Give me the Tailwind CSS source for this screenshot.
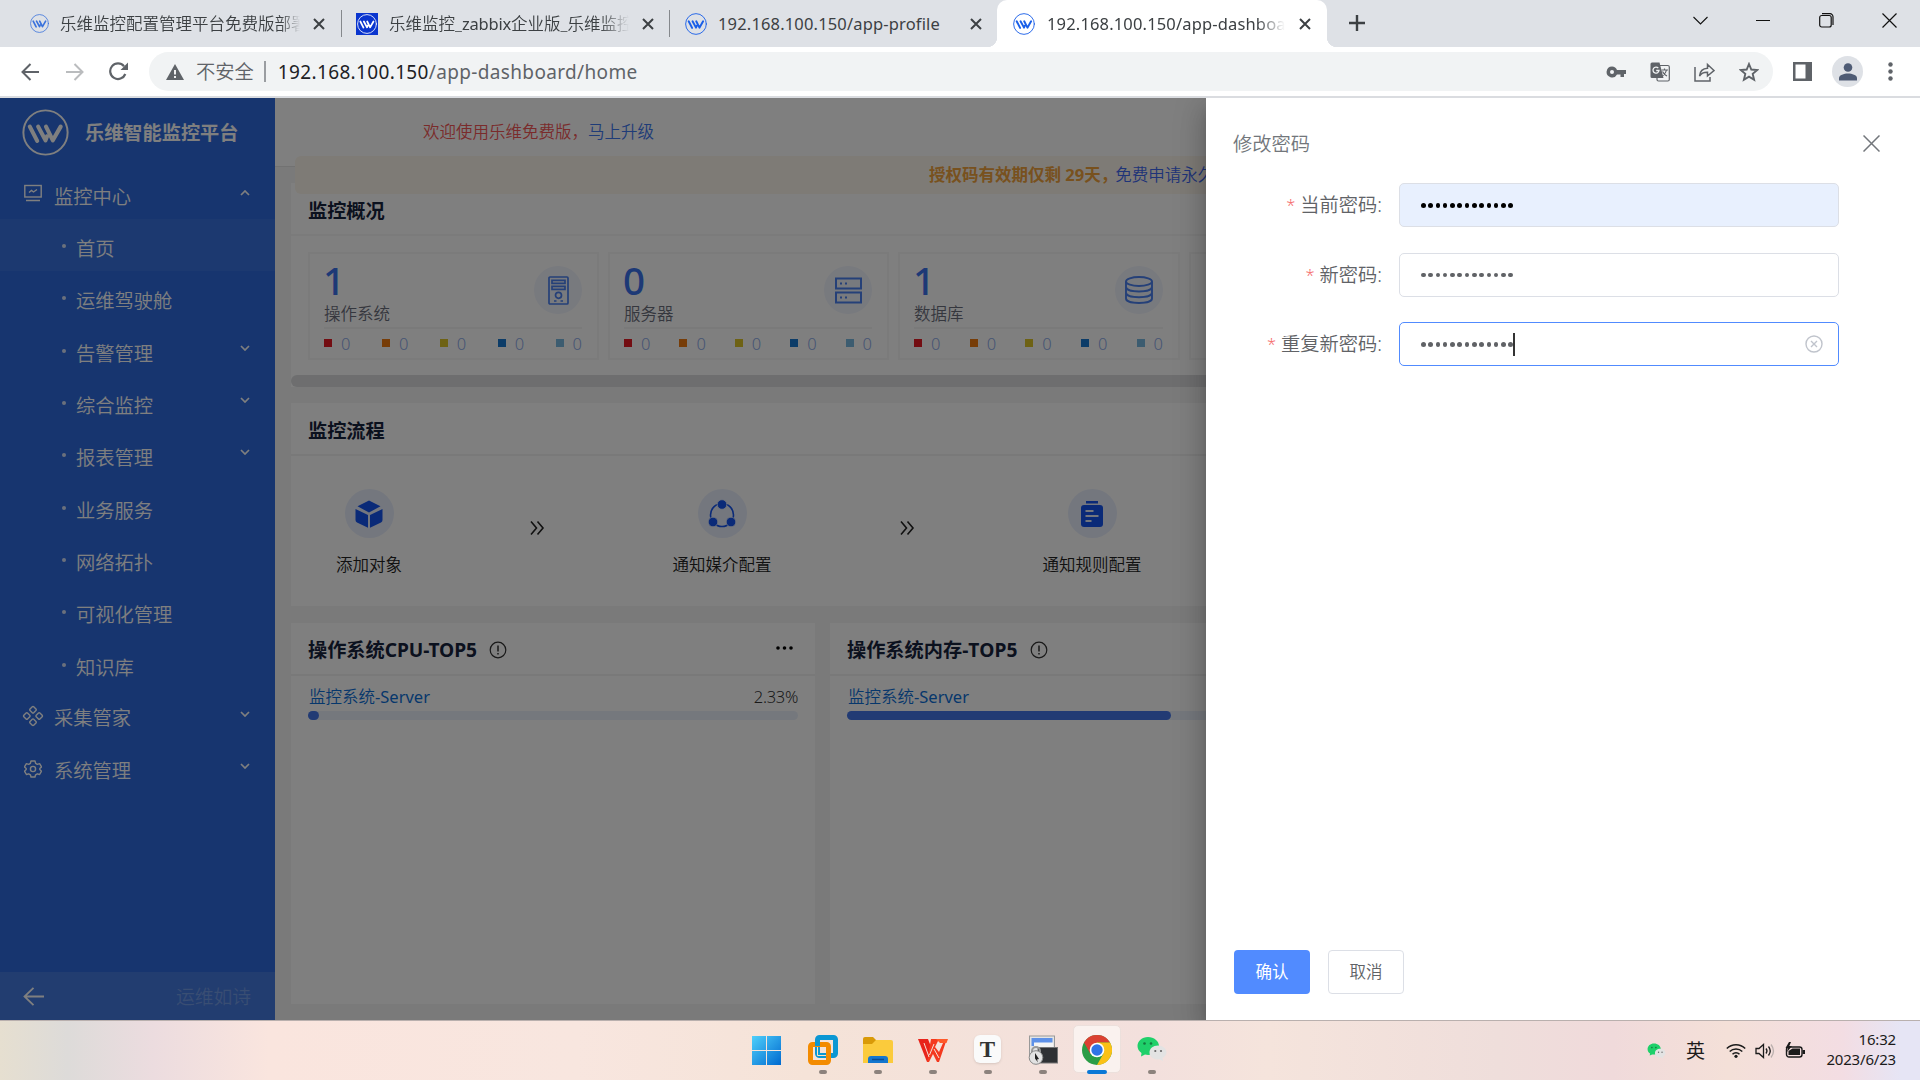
<!DOCTYPE html>
<html lang="zh-CN">
<head>
<meta charset="utf-8">
<title>乐维智能监控平台</title>
<script src="https://cdn.jsdelivr.net/npm/@tailwindcss/browser@4"></script>
</head>
<body class="w-[1920px] h-[1080px] overflow-hidden flex flex-col font-['Noto_Sans','Noto_Sans_CJK_SC',sans-serif] bg-white text-[16.5px] leading-none">
<svg class="hidden">
  <symbol id="logo" viewBox="0 0 48 48"><g fill="none" stroke="currentColor" stroke-linecap="round" stroke-linejoin="round"><circle cx="24" cy="24" r="22.6" stroke-width="2"/><path stroke-width="4.2" d="M8 18l7.5 14.5M16.500 18l7.500 14 1.500-4M24.500 18l7 14L39.500 18"/></g></symbol>
  <symbol id="x" viewBox="0 0 12 12"><path d="M1 1l10 10M11 1L1 11" stroke="currentColor" stroke-width="2" fill="none"/></symbol>
  <symbol id="down" viewBox="0 0 10 6"><path d="M1 1l4 4 4-4" stroke="currentColor" stroke-width="1.700" fill="none"/></symbol>
  <symbol id="info" viewBox="0 0 18 18"><circle cx="9" cy="9" r="7.800" stroke="currentColor" stroke-width="1.200" fill="none"/><path d="M9 4.500v6M9 12v1.500" stroke="currentColor" stroke-width="1.500"/></symbol>
  <symbol id="next" viewBox="0 0 16 16"><path d="M2 1.500l5.500 6.500L2 14.500M8.500 1.500L14 8l-5.500 6.500" stroke="currentColor" stroke-width="1.600" fill="none"/></symbol>
  <symbol id="wechat" viewBox="0 0 30 26"><path d="M11 1C5 1 .5 5 .5 10c0 3 1.500 5.300 4 7L4 20.500l4-2c6 1.500 14-1.500 14-8.500C22 5 17 1 11 1z" fill="#1fd06a"/><circle cx="7.500" cy="7.500" r="1.300" fill="#14773e"/><circle cx="14" cy="7.500" r="1.300" fill="#14773e"/><path d="M21 9.500c-5 0-8.500 3-8.500 7 0 4.500 4.500 7.500 10 6.800l3.500 1.700-.5-3c2.500-1.300 4-3.300 4-5.500 0-4-3.500-7-8.500-7z" fill="#e3e3e3"/><circle cx="18.300" cy="15" r="1.100" fill="#666"/><circle cx="24" cy="15" r="1.100" fill="#666"/></symbol>
</svg>

<!-- tab strip -->
<div class="h-[47px] shrink-0 bg-[#dee1e6] flex text-[#3c4043] font-[350]">
  <div class="w-[341px] h-full pl-[30px] flex items-center">
    <svg class="size-[19px] text-[#3a72dc]"><use href="#logo"/></svg>
    <div class="ml-[11px] w-[240px] overflow-hidden whitespace-nowrap leading-6 [mask-image:linear-gradient(90deg,#000_92%,transparent)]">乐维监控配置管理平台免费版部署</div>
    <svg class="ml-[13px] size-3"><use href="#x"/></svg>
  </div>
  <div class="w-px h-[27px] mt-[10px] bg-[#85888c]"></div>
  <div class="w-[327px] h-full pl-[14px] flex items-center">
    <div class="size-[22px] bg-[#0a35cf] text-white p-px"><svg class="size-5"><use href="#logo"/></svg></div>
    <div class="ml-[11px] w-[240px] overflow-hidden whitespace-nowrap leading-6 [mask-image:linear-gradient(90deg,#000_88%,transparent)]">乐维监控_<span class="font-normal tracking-[-0.2px]">zabbix</span>企业版_乐维监控</div>
    <svg class="ml-[13px] size-3"><use href="#x"/></svg>
  </div>
  <div class="w-px h-[27px] mt-[10px] bg-[#85888c]"></div>
  <div class="w-[327px] h-full pl-[15px] flex items-center">
    <svg class="size-[22px] text-[#1a5fe8]"><use href="#logo"/></svg>
    <div class="ml-[11px] w-[240px] whitespace-nowrap leading-6 font-normal tracking-[0.160px]">192.168.100.150/app-profile</div>
    <svg class="ml-[12px] size-3"><use href="#x"/></svg>
  </div>
  <div class="relative w-[330px] h-full pl-4 flex items-center bg-white rounded-t-[10px]">
    <div class="absolute -left-[10px] bottom-0 size-[10px] bg-[radial-gradient(circle_at_0_0,transparent_10px,#fff_10.5px)]"></div>
    <div class="absolute -right-[10px] bottom-0 size-[10px] bg-[radial-gradient(circle_at_100%_0,transparent_10px,#fff_10.5px)]"></div>
    <svg class="size-[22px] text-[#1a5fe8]"><use href="#logo"/></svg>
    <div class="ml-[12px] w-[238px] overflow-hidden whitespace-nowrap leading-6 font-normal tracking-[0.160px] [mask-image:linear-gradient(90deg,#000_88%,transparent)]">192.168.100.150/app-dashboard</div>
    <svg class="ml-[14px] size-3"><use href="#x"/></svg>
  </div>
  <svg class="ml-[22px] mt-[15px] size-4" viewBox="0 0 16 16"><path d="M8 0v16M0 8h16" stroke="#3c4043" stroke-width="2.400"/></svg>
  <div class="ml-auto mr-[23px] mt-[13px] flex items-start gap-[48px] text-[#111]">
    <svg class="size-[15px]" viewBox="0 0 15 15"><path d="M.5 4l7 7 7-7" stroke="currentColor" stroke-width="1.100" fill="none"/></svg>
    <svg class="size-[15px]" viewBox="0 0 15 15"><path d="M0 7.500h14" stroke="currentColor" stroke-width="1"/></svg>
    <svg class="size-[15px]" viewBox="0 0 15 15"><g stroke="currentColor" stroke-width="1.200" fill="none"><rect x=".7" y="2.500" width="11.500" height="11.500" rx="2"/><path d="M3 .7h8a3 3 0 0 1 3 3V12"/></g></svg>
    <svg class="size-[15px]" viewBox="0 0 15 15"><path d="M.5.5l14 14M14.500.5l-14 14" stroke="currentColor" stroke-width="1.200"/></svg>
  </div>
</div>

<!-- toolbar -->
<div class="h-[51px] shrink-0 bg-white border-b-2 border-[#dadce0] flex items-center text-[#5f6368]">
  <svg class="ml-[21px] size-[18px]" viewBox="0 0 18 18"><path d="M18 9H2M9.500 1L1.500 9l8 8" stroke="currentColor" stroke-width="2" fill="none"/></svg>
  <svg class="ml-[27px] size-[18px] text-[#babcbe]" viewBox="0 0 18 18"><path d="M0 9h16M8.500 1l8 8-8 8" stroke="currentColor" stroke-width="2" fill="none"/></svg>
  <svg class="ml-[25px] size-[19px]" viewBox="0 0 19 19"><path d="M16.300 12A7.800 7.800 0 1 1 15 4.200" stroke="currentColor" stroke-width="2.200" fill="none"/><path d="M19 .5V8h-7.500z" fill="currentColor"/></svg>
  <div class="ml-[21px] w-[1624px] h-[39px] rounded-full bg-[#f1f3f4] flex items-center pl-[17px]">
    <svg class="w-[18px] h-4" viewBox="0 0 18 16"><path d="M9 0l9 16H0z" fill="currentColor"/><path d="M9 6v4.500M9 12v2" stroke="#fff" stroke-width="1.800"/></svg>
    <span class="ml-[12px] text-[19.300px] font-[350] leading-7">不安全</span>
    <span class="ml-[10px] w-[2px] h-[21px] bg-[#9a9da1]"></span>
    <span class="ml-[12px] text-[19px] leading-7 tracking-[0.350px] whitespace-nowrap"><span class="text-[#202124]">192.168.100.150</span>/app-dashboard/home</span>
    <div class="ml-auto mr-[14px] flex items-center gap-6">
      <svg class="size-5" viewBox="0 0 20 20"><path d="M6 4.500a5.500 5.500 0 1 0 5 8h3.500V15H18v-3h2V8h-9a5.500 5.500 0 0 0-5-3.500z" fill="currentColor"/><circle cx="6" cy="10" r="2" fill="#f1f3f4"/></svg>
      <svg class="size-5" viewBox="0 0 20 20"><rect x="7" y="3.500" width="12.300" height="15.500" rx="1.500" fill="#f1f3f4" stroke="currentColor" stroke-width="1.200"/><path d="M2 .5h7.500L13.500 16H2a1.500 1.500 0 0 1-1.500-1.500V2A1.500 1.500 0 0 1 2 .5z" fill="currentColor"/><path d="M8.300 6.200A3 3 0 1 0 9 8.500H6.200" fill="none" stroke="#f1f3f4" stroke-width="1.300"/><path d="M11.500 8h6.500M14.500 6.500V8M16.500 8c-.5 2.500-2 4.500-4 6M12.500 9.500c1 2 2.500 3.500 4.500 4.500" fill="none" stroke="currentColor" stroke-width="1.200"/></svg>
      <svg class="w-[21px] h-5" viewBox="0 0 21 20"><path d="M1 5v14h15v-4M5.500 14C6 9 9 6.500 13.500 6.300V2.500l6.500 6-6.500 5.500v-3.800c-4-.1-6.300 1-8 3.800z" fill="none" stroke="currentColor" stroke-width="1.500"/></svg>
      <svg class="size-5" viewBox="0 0 20 20"><path d="M10 2l2.300 5.500 6 .5-4.600 3.900 1.400 5.800L10 14.600l-5.100 3.100 1.400-5.800L1.700 8l6-.5z" fill="none" stroke="currentColor" stroke-width="1.900"/></svg>
    </div>
  </div>
  <svg class="ml-5 size-[19px]" viewBox="0 0 19 19"><path fill-rule="evenodd" d="M0 0h19v19H0zM2.500 2.500v14h10v-14z" fill="currentColor"/></svg>
  <div class="ml-5 size-[31px] rounded-full bg-[#dee1e6] flex items-center justify-center"><svg class="size-[18px]" viewBox="0 0 18 18"><circle cx="9" cy="4.500" r="4.300" fill="#4e5b74"/><path d="M0 17.500v-2.500c0-3 5-4.500 9-4.500s9 1.500 9 4.500v2.500z" fill="#4e5b74"/></svg></div>
  <svg class="ml-[25px] w-[5px] h-[19px]" viewBox="0 0 5 19"><g fill="currentColor"><circle cx="2.500" cy="2.500" r="2.200"/><circle cx="2.500" cy="9.500" r="2.200"/><circle cx="2.500" cy="16.500" r="2.200"/></g></svg>
</div>

<!-- application -->
<div class="relative h-[922px] shrink-0 flex overflow-hidden">
  <aside class="w-[275px] shrink-0 h-full bg-[#2e6bdf] text-white flex flex-col text-[19.250px] font-[350]">
    <div class="h-[69px] pl-[22px] pt-[11px] flex">
      <svg class="size-[47px]"><use href="#logo"/></svg>
      <div class="ml-[16px] h-[48px] flex items-center font-bold text-[19.200px]">乐维智能监控平台</div>
    </div>
    <div class="h-[52px] pl-6 pr-[25px] flex items-center">
      <svg class="size-[18px]" viewBox="0 0 18 18"><g fill="none" stroke="currentColor" stroke-width="1.400"><rect x=".8" y="1.500" width="16.400" height="11.500"/><path d="M2 16.500h14M5 8.500l2.500-2 2 1.500L13 5.500"/></g></svg>
      <span class="ml-[12px] h-6 leading-6 mt-2">监控中心</span><svg class="ml-auto w-[10px] h-[6px] rotate-180"><use href="#down"/></svg>
    </div>
    <div id="menu" class="flex flex-col"></div>
    <div class="h-[52.400px] pl-[22px] pr-[25px] flex items-center">
      <svg class="size-[22px]" viewBox="0 0 22 22"><g fill="none" stroke="currentColor" stroke-width="1.400"><rect x="-2.600" y="-2.600" width="5.200" height="5.200" rx="1" transform="translate(11 4.800) rotate(45)"/><rect x="-2.600" y="-2.600" width="5.200" height="5.200" rx="1" transform="translate(11 17.200) rotate(45)"/><rect x="-2.600" y="-2.600" width="5.200" height="5.200" rx="1" transform="translate(4.800 11) rotate(45)"/><rect x="-2.600" y="-2.600" width="5.200" height="5.200" rx="1" transform="translate(17.200 11) rotate(45)"/></g></svg>
      <span class="ml-[10px] h-6 leading-6 mt-[5px]">采集管家</span><svg class="ml-auto mb-[4px] w-[10px] h-[6px]"><use href="#down"/></svg>
    </div>
    <div class="h-[52.400px] pl-[24px] pr-[25px] flex items-center">
      <svg class="size-[18px] mt-px" viewBox="0 0 18 18"><g fill="none" stroke="currentColor" stroke-width="1.400"><path stroke-linejoin="round" d="M7 1h4l.6 2.300 1.700 1 2.300-.7 1.900 3.300L15.800 8.600v.9l1.700 1.700-1.900 3.300-2.300-.7-1.700 1L11 17H7l-.6-2.200-1.700-1-2.300.7-1.900-3.300 1.700-1.700v-.9L.5 6.900l1.900-3.300 2.300.7 1.700-1z"/><circle cx="9" cy="9" r="2.600"/></g></svg>
      <span class="ml-[12px] h-6 leading-6 mt-[6px]">系统管理</span><svg class="ml-auto mb-[4px] w-[10px] h-[6px]"><use href="#down"/></svg>
    </div>
    <div class="mt-auto h-[48px] bg-[#457be0] pl-[23px] pr-6 flex items-center justify-between">
      <svg class="w-[21px] h-[19px]" viewBox="0 0 21 19"><path d="M21 9.500H1.500M10.500.8L1.500 9.500l9 8.700" fill="none" stroke="currentColor" stroke-width="1.800"/></svg>
      <span class="text-[18.800px] text-white/25 leading-6 mt-px">运维如诗</span>
    </div>
  </aside>

  <main class="w-[1645px] h-full shrink-0 bg-[#f5f5f5] flex flex-col">
    <header class="h-[69px] shrink-0 bg-white border-b border-[#e4e4e4] pl-[148px] flex items-center font-[350] leading-6">
      <span class="text-[#f55656]">欢迎使用乐维免费版，</span><span class="text-[#3f78f0]">马上升级</span>
    </header>
    <div class="relative -mt-[11px] ml-5 h-[38px] shrink-0 rounded-[6px] bg-[#fdf6ec] z-10 flex items-center pl-[634px] leading-6">
      <b class="text-[#f0a23c]">授权码有效期仅剩 29天，</b><span class="text-[#3f68f0] font-[350] -ml-[2px]">免费申请永久</span>
    </div>
    <section class="-mt-[11px] ml-[16px] h-[204px] shrink-0 bg-white flex flex-col">
      <div class="h-[53px] border-b-2 border-[#f6f6f6] pl-[17px] pt-[16px] text-[19.200px] leading-6 font-bold text-[#17233d] shrink-0">监控概况</div>
      <div id="stats" class="flex gap-[9px] pl-[17px] pt-4 h-[139px]"></div>
      <div class="h-3 rounded-full bg-[#dcdddf]"></div>
    </section>
    <section class="mt-4 ml-[16px] h-[203px] shrink-0 bg-white">
      <div class="h-[53px] border-b-2 border-[#f3f3f3] pl-[17px] flex items-center pt-1 text-[19.200px] leading-6 font-bold text-[#17233d]">监控流程</div>
      <div class="h-[150px] flex pl-[28px] pt-[33px] text-[#222] font-[350] leading-6 whitespace-nowrap">
        <div class="w-[100px] flex flex-col items-center">
          <div class="size-[49px] rounded-full bg-[#e9effd] flex items-center justify-center text-[#1555f0]"><svg class="size-[28px]" viewBox="0 0 28 28"><path d="M14 .5l11.500 5.800L14 12.500 2.500 6.300zM0.500 9l12.500 6v12.700L2 22.500Q.5 21.800.5 20zM27.500 9L15 15v12.700l11-5.200q1.500-.7 1.500-2.500z" fill="currentColor"/></svg></div>
          <span class="mt-[15px]">添加对象</span>
        </div>
        <svg class="ml-[110px] mt-[31px] size-4"><use href="#next"/></svg>
        <div class="ml-[127px] w-[100px] flex flex-col items-center">
          <div class="size-[49px] rounded-full bg-[#e9effd] flex items-center justify-center text-[#1555f0]"><svg class="w-7 h-[30px]" viewBox="0 0 28 30"><circle cx="14" cy="16" r="11.500" fill="none" stroke="currentColor" stroke-width="1.600"/><circle cx="14" cy="5.500" r="4.800" fill="currentColor" stroke="#e9effd" stroke-width=".8"/><circle cx="5" cy="23" r="4.800" fill="currentColor" stroke="#e9effd" stroke-width=".8"/><circle cx="23" cy="23" r="4.800" fill="currentColor" stroke="#e9effd" stroke-width=".8"/></svg></div>
          <span class="mt-[15px]">通知媒介配置</span>
        </div>
        <svg class="ml-[127px] mt-[31px] size-4"><use href="#next"/></svg>
        <div class="ml-[127px] w-[100px] flex flex-col items-center">
          <div class="size-[49px] rounded-full bg-[#e9effd] flex items-center justify-center text-[#1555f0]"><svg class="w-[22px] h-[26px]" viewBox="0 0 22 26"><path d="M5 0h12v2.500H5z" fill="currentColor"/><rect y="4" width="22" height="22" rx="3" fill="currentColor"/><path d="M4.500 10h8M4.500 15h13M4.500 20h6" stroke="#e9effd" stroke-width="2"/></svg></div>
          <span class="mt-[15px]">通知规则配置</span>
        </div>
      </div>
    </section>
    <div class="mt-[17px] ml-[16px] h-[381px] shrink-0 flex gap-[15px]">
      <section class="w-[524px] bg-white">
        <div class="h-[53px] border-b-2 border-[#f3f3f3] pl-[17px] pr-[22px] flex items-center pt-[2px] text-[19.200px] leading-6 font-bold text-[#17233d]"><span>操作系统<span class="tracking-[-0.100px]">CPU-TOP5</span></span><svg class="ml-[12px] size-[18px] text-[#333]"><use href="#info"/></svg>
          <svg class="ml-auto mb-1 w-[17px] h-1 text-black" viewBox="0 0 17 4"><g fill="currentColor"><circle cx="2" cy="2" r="1.800"/><circle cx="8.500" cy="2" r="1.800"/><circle cx="15" cy="2" r="1.800"/></g></svg></div>
        <div class="px-[17px] pt-[9px]">
          <div class="flex justify-between pl-px leading-6"><span class="text-[#0d6fd8]"><span class="font-[350]">监控系统</span><span>-Server</span></span><span class="text-[#333] font-[350] tracking-[-0.300px]">2.33%</span></div>
          <div class="mt-[2px] h-[9px] rounded-full bg-[#ebf1fb]"><div class="w-[11px] h-full rounded-full bg-[#4577e8]"></div></div>
        </div>
      </section>
      <section class="w-[524px] bg-white">
        <div class="h-[53px] border-b-2 border-[#f3f3f3] pl-[17px] flex items-center pt-[2px] text-[19.200px] leading-6 font-bold text-[#17233d]"><span>操作系统内存<span class="tracking-[0.100px]">-TOP5</span></span><svg class="ml-[12px] size-[18px] text-[#333]"><use href="#info"/></svg></div>
        <div class="px-[17px] pt-[9px]">
          <div class="pl-px leading-6 text-[#0d6fd8]"><span class="font-[350]">监控系统</span><span>-Server</span></div>
          <div class="mt-[2px] h-[9px] rounded-full bg-[#ebf1fb]"><div class="w-[324px] h-full rounded-full bg-[#4577e8]"></div></div>
        </div>
      </section>
    </div>
  </main>

  <div class="absolute inset-0 bg-black/50 z-20"></div>

  <!-- change-password drawer -->
  <div class="absolute right-0 top-0 z-30 w-[714px] h-full bg-white flex flex-col text-[#606266] font-[350] shadow-[0_8px_10px_-5px_rgba(0,0,0,.2),0_16px_24px_2px_rgba(0,0,0,.14),0_6px_30px_5px_rgba(0,0,0,.12)]">
    <div class="h-[85px] pl-[27px] pr-[40px] pt-[6px] flex items-center justify-between text-[#72767b]">
      <span class="text-[19.300px] leading-6">修改密码</span>
      <svg class="size-[17px]" viewBox="0 0 17 17"><path d="M.5.500l16 16M16.500.500l-16 16" stroke="#72767b" stroke-width="1.500"/></svg>
    </div>
    <div id="form" class="flex flex-col gap-[25.500px] text-[19.250px]"></div>
    <div class="mt-auto mb-[26px] ml-[28px] flex gap-[18px] text-[16.500px]">
      <div class="w-[76px] h-[44px] rounded-[4px] bg-[#518bff] text-white font-normal flex items-center justify-center pt-px">确认</div>
      <div class="w-[76px] h-[44px] rounded-[4px] border border-[#dcdfe6] flex items-center justify-center pt-px">取消</div>
    </div>
  </div>
</div>

<!-- taskbar -->
<div class="h-[60px] border-t border-[#b9b0ae] bg-[linear-gradient(90deg,#e6dfd0_0,#dddbd9_3.500%,#ecdcdf_8%,#fae5de_14%,#f8e6df_30%,#f5e3d8_42%,#f3e0dd_60%,#f5e4dc_66%,#efdedb_78%,#f0dadb_84%,#f4e0d8_90%,#f3dde3_96%,#e6e5f5_99%)] flex">
  <div class="ml-[739px] flex items-center h-[59px]">
    <div class="w-[55px] h-full pt-[15px] flex flex-col items-center">
      <svg class="size-[29px]" viewBox="0 0 29 29"><defs><linearGradient id="w" x1="0" y1="0" x2="1" y2="1"><stop stop-color="#4fd0fb"/><stop offset="1" stop-color="#0069cf"/></linearGradient></defs><path d="M0 0h14v14H0zM15 0h14v14H15zM0 15h14v14H0zM15 15h14v14H15z" fill="url(#w)"/></svg>
    </div>
    <div class="w-[56px] h-full pl-px pt-[14px] flex flex-col items-center">
      <svg class="size-[30px]" viewBox="0 0 30 30"><g fill="none" stroke-width="5"><rect x="9.500" y="2.500" width="18" height="18" rx="2" stroke="#0b97d3"/><rect x="2.500" y="9.500" width="18" height="18" rx="2" stroke="#f38b00"/><path d="M9.500 12v8.500H18" stroke="#fbe3c2" stroke-width="1"/><path d="M9.500 5v6" stroke="#0b97d3"/></g></svg>
      <i class="mt-[5px] w-2 h-1 rounded-full bg-[#8c827d]"></i>
    </div>
    <div class="w-[55px] h-full pt-[14px] flex flex-col items-center">
      <svg class="size-[30px]" viewBox="0 0 30 30"><path d="M0 4q0-2 2-2h8l3 3v5H0z" fill="#d99a08"/><path d="M0 9h9l4-4h15q2 0 2 2v21H0z" fill="#fbcb3c"/><path d="M5 28v-4q0-3 3-3h14q3 0 3 3v4z" fill="#1477cf"/><path d="M9 24.500h12" stroke="#0b4c92" stroke-width="1.500"/></svg>
      <i class="mt-[5px] w-2 h-1 rounded-full bg-[#8c827d]"></i>
    </div>
    <div class="w-[55px] h-full pt-[14px] flex flex-col items-center">
      <svg class="size-[30px]" viewBox="0 0 30 30"><path d="M0 4h10l5 13-5 10H9z" fill="#e8241b"/><path d="M13 4h8l-4 8 4 5 4-9h2.500L21 27h-2l-4-8-4 8H9z" fill="#f4391f"/><path d="M18 4h12l-1.500 4H22z" fill="#ff5a2a"/><path d="M6 8l5 14M16 9l-4.500 11M16 14l5 9" stroke="#f6e2d8" stroke-width="1" fill="none"/></svg>
      <i class="mt-[5px] w-2 h-1 rounded-full bg-[#8c827d]"></i>
    </div>
    <div class="w-[55px] h-full pt-[14px] flex flex-col items-center">
      <div class="w-[27px] h-[28px] mb-[2px] rounded-[6px] bg-[#fafafa] shadow flex items-center justify-center font-['Liberation_Serif',serif] font-bold text-[23px] text-[#333]">T</div>
      <i class="mt-[5px] w-2 h-1 rounded-full bg-[#8c827d]"></i>
    </div>
    <div class="w-[55px] h-full pt-[14px] flex flex-col items-center">
      <svg class="size-[30px]" viewBox="0 0 30 30"><rect x="1.500" y="1" width="25" height="19" fill="#e4e4e4" stroke="#999"/><rect x="3.500" y="3" width="21" height="8" fill="#5e91e8"/><path d="M6 7.500h19v5H6z" fill="#f4f4f4"/><rect x="10" y="12.500" width="19.500" height="15.500" fill="#2f3134" stroke="#777"/><path d="M4 19v-3a4 4 0 0 1 8 0v3" stroke="#999" stroke-width="2" fill="none"/><circle cx="8" cy="22.500" r="6.800" fill="#e2e2e2" stroke="#888"/><path d="M7 18l4 6-2 .5 1 3-3-4z" fill="#222"/></svg>
      <i class="mt-[5px] w-2 h-1 rounded-full bg-[#8c827d]"></i>
    </div>
    <div class="w-[48px] h-[48px] ml-[3px] mr-[4px] -mt-[3px] pt-[9px] rounded-[5px] bg-[#faf2ef] border border-[#ece0dc] flex flex-col items-center">
      <svg class="size-[30px] shrink-0" viewBox="0 0 30 30"><circle cx="15" cy="15" r="15" fill="#2a9d46"/><path d="M15 15L2 7.500A15 15 0 0 1 28 7.500H15z" fill="#db4132"/><path d="M15 7.500h13A15 15 0 0 1 15 30l6.500-11.500z" fill="#fbc116"/><path d="M2 7.500L8.500 19 15 15V7.500z" fill="#db4132"/><circle cx="15" cy="15" r="7.300" fill="#fff"/><circle cx="15" cy="15" r="5.700" fill="#2f74e6"/></svg>
      <i class="mt-[5px] w-5 h-1 shrink-0 rounded-full bg-[#0a78d6]"></i>
    </div>
    <div class="w-[55px] h-full pt-[14px] flex flex-col items-center">
      <svg class="w-[30px] h-[26px] mt-px mb-[3px] -ml-[2px]"><use href="#wechat"/></svg>
      <i class="mt-[5px] -ml-[2px] w-2 h-1 rounded-full bg-[#8c827d]"></i>
    </div>
  </div>
  <div class="ml-auto mr-6 h-[59px] flex items-center text-[#1b1b1b]">
    <svg class="w-[19px] h-[16px]"><use href="#wechat"/></svg>
    <span class="ml-[20px] text-[19px] leading-6">英</span>
    <svg class="ml-[21px] w-5 h-[15px]" viewBox="0 0 20 15"><g fill="none" stroke="currentColor" stroke-width="1.500"><path d="M.8 5.500a13 13 0 0 1 18.400 0M3.700 8.500a9 9 0 0 1 12.600 0M6.500 11.300a5 5 0 0 1 7 0"/></g><circle cx="10" cy="13.300" r="1.600" fill="currentColor"/></svg>
    <svg class="ml-[9px] w-5 h-4" viewBox="0 0 20 16"><g fill="none" stroke="currentColor" stroke-width="1.300"><path d="M1 5.500h3L8.500 1.500v13L4 10.500H1zM11 5.500q2 2.500 0 5M13.500 3.500q3.500 4.500 0 9"/><path d="M16 1.500q5 6.500 0 13" stroke="#bbb0ae"/></g></svg>
    <svg class="ml-[10px] w-5 h-[17px]" viewBox="0 0 20 17"><rect x="1.500" y="5" width="15.500" height="10" rx="2.500" fill="none" stroke="currentColor" stroke-width="1.400"/><path d="M3.500 9l4-2.500H15V13H3.500zM17.500 8H20v4h-2.500z" fill="currentColor"/><path d="M4 0L.5 6H3L2 10l5-6H4.300L6 0z" fill="currentColor"/></svg>
    <div class="ml-[21px] mb-1 w-[70px] text-right text-[15px] leading-5 tracking-[-0.180px] whitespace-nowrap"><div>16:32</div><div>2023/6/23</div></div>
  </div>
</div>

<script>
const down = '<svg class="ml-auto mb-[4px] w-[10px] h-[6px]"><use href="#down"/></svg>';
document.getElementById('menu').innerHTML = [['首页',0],['运维驾驶舱',0],['告警管理',1],['综合监控',1],['报表管理',1],['业务服务',0],['网络拓扑',0],['可视化管理',0],['知识库',0]]
  .map(([t, sub], i) => `<div class="h-[52.300px] pl-[62px] pr-[25px] flex items-center ${i ? '' : 'bg-[#3872e1]'}"><i class="size-1 rounded-full bg-white/80 mt-[2px]"></i><span class="ml-[10px] mt-[8px] h-6 leading-6">${t}</span>${sub ? down : ''}</div>`).join('');

const icons = [
  '<svg class="w-[21px] h-[29px]" viewBox="0 0 21 29"><g fill="none" stroke="currentColor" stroke-width="1.700"><rect x="1" y="1" width="19" height="27" rx="1"/><path d="M4 4.300h13v3H4zM4 10.300h13v3H4z"/><circle cx="10.500" cy="19.300" r="3"/><path d="M6 25h2.500M12.500 25H15"/></g></svg>',
  '<svg class="w-[27px] h-[27px]" viewBox="0 0 27 27"><g fill="none" stroke="currentColor" stroke-width="2"><path d="M1 1.500h25v10H1zM1 15.500h25v10H1z"/><path d="M5 6.500h2M10 6.500h2M5 20.500h2M10 20.500h2"/></g></svg>',
  '<svg class="w-[28px] h-[28px]" viewBox="0 0 28 28"><g fill="none" stroke="currentColor" stroke-width="1.900"><ellipse cx="14" cy="5.500" rx="13" ry="4.500"/><path d="M1 5.500v17c0 6 26 6 26 0v-17M1 11c0 6 26 6 26 0M1 16.800c0 6 26 6 26 0"/></g></svg>'];
const colors = ['bg-[#e61a24]','bg-[#ee7a10]','bg-[#dcc428]','bg-[#1878d0]','bg-[#78b8e0]'];
document.getElementById('stats').innerHTML = [[1,'操作系统',291],[0,'服务器',281],[1,'数据库',282]]
  .map(([n, t, w], i) => `<div class="shrink-0 h-[108px] border-2 border-[#f6f6f6] pl-[14px] pr-[15px] pt-[12px]" style="width:${w}px">
    <div class="flex justify-between h-[63px] border-b-2 border-[#f4f4f4]">
      <div class="flex flex-col"><span class="text-[38.500px] font-medium leading-[28px] text-[#3a72ec] -ml-px">${n}</span><span class="mt-[8px] leading-6 font-[350] text-[#6b6e7c]">${t}</span></div>
      <div class="size-[48px] rounded-full bg-[#f1f4fd] text-[#4a80f0] flex items-center justify-center">${icons[i]}</div>
    </div>
    <div class="flex justify-between mt-[4px] items-center h-[22px] font-[350] text-[#8ba9e8]">${colors.map(c => `<span class="flex items-center"><i class="size-2 -mt-[2px] ${c}"></i><span class="ml-[9px]">0</span></span>`).join('')}</div>
  </div>`).join('') + '<div class="shrink-0 h-[108px] w-[282px] border-2 border-[#f6f6f6]"></div>';

const dots = Array(13).fill('<i class="size-[4.600px] rounded-full bg-current"></i>').join('');
document.getElementById('form').innerHTML = [['当前密码','bg-[#e8f0fe] border-[#dcdfe6] text-black'],['新密码','bg-white border-[#dcdfe6]'],['重复新密码','bg-white border-[#518bff]']]
  .map(([t, c], i) => `<div class="flex items-center h-[44px]"><div class="w-[176px] flex justify-end leading-6"><span class="text-[#f56c6c] text-[16.500px] mr-[5px]">*</span>${t}<span>:</span></div>
    <div class="ml-[17px] w-[440px] h-[44px] rounded-[5px] border flex items-center pl-[21px] pr-[15px] ${c}"><div class="flex gap-[2.700px] pt-px">${dots}</div>${i == 2 ? '<i class="w-[2px] h-[23px] bg-[#333]"></i><svg class="ml-auto size-[18px]" viewBox="0 0 18 18"><g fill="none" stroke="#c0c4cc" stroke-width="1.400"><circle cx="9" cy="9" r="8"/><path d="M6 6l6 6M12 6l-6 6"/></g></svg>' : ''}</div></div>`).join('');
</script>
</body>
</html>
